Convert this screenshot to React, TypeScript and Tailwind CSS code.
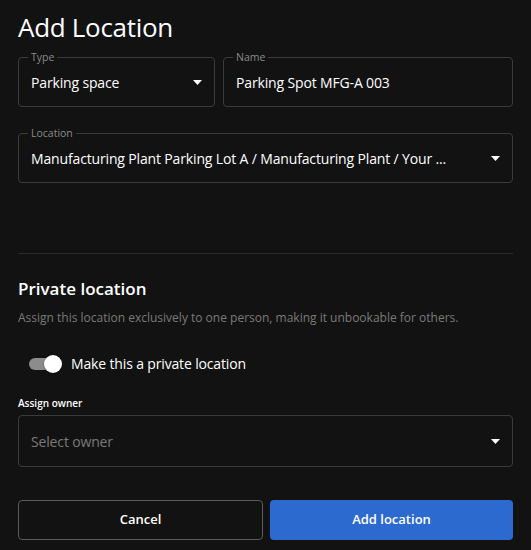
import React from 'react'

const Caret = () => (
  <svg width="9" height="5" viewBox="0 0 9 5" className="shrink-0">
    <path d="M0 0 L9 0 L4.5 5 Z" fill="#ffffff" />
  </svg>
)

interface FieldProps {
  label: string
  children: React.ReactNode
  select?: boolean
  className?: string
}

const OutlinedField = ({ label, children, select, className }: FieldProps) => (
  <div
    className={`relative flex h-[50px] items-center rounded-[4px] border border-[#3b3b3b] pl-3 pr-3 ${className ?? ''}`}
  >
    <span className="absolute -top-[8px] left-[9px] bg-[#121212] px-[3px] text-[10.5px] leading-[14px] text-[#8a8a8a]">
      {label}
    </span>
    <span className="flex-1 truncate text-[14px] tracking-[-0.15px] text-white">{children}</span>
    {select && (
      <span className="ml-3">
        <Caret />
      </span>
    )}
  </div>
)

export default function App() {
  return (
    <div
      className="min-h-[550px] w-[531px] bg-[#121212] px-[18px] pt-[10px] text-white"
      style={{ fontFamily: '"Open Sans", "Noto Sans", sans-serif' }}
    >
      <h1 className="text-[26px] leading-[34px] font-normal tracking-[-0.3px]">Add Location</h1>

      <div className="mt-[13px] flex gap-[8px]">
        <OutlinedField label="Type" select className="w-[197px]">
          Parking space
        </OutlinedField>
        <OutlinedField label="Name" className="flex-1">
          Parking Spot MFG-A 003
        </OutlinedField>
      </div>

      <OutlinedField label="Location" select className="mt-[26px]">
        Manufacturing Plant Parking Lot A / Manufacturing Plant / Your ...
      </OutlinedField>

      <div className="mt-[70px] h-px bg-[#2a2a2a]" />

      <h2 className="mt-[23px] text-[17px] leading-[24px] font-semibold">Private location</h2>
      <p className="mt-[9px] text-[12px] leading-[16px] text-[#7a7a7a]">
        Assign this location exclusively to one person, making it unbookable for others.
      </p>

      <div className="mt-[28px] flex items-center pl-[11px]">
        <div className="relative h-[12px] w-[27px] rounded-full bg-[#8c8c8c]">
          <div className="absolute -top-[3px] right-[-6px] h-[18px] w-[18px] rounded-full bg-white shadow-[0_1px_2px_rgba(0,0,0,0.4)]" />
        </div>
        <span className="ml-[15px] text-[14px] leading-[20px] tracking-[-0.15px]">Make this a private location</span>
      </div>

      <div className="mt-[22px] text-[10px] leading-[14px] font-semibold">Assign owner</div>

      <div className="mt-[5px] flex h-[52px] items-center rounded-[4px] border border-[#3b3b3b] px-3">
        <span className="flex-1 text-[14px] tracking-[-0.15px] text-[#7a7a7a]">Select owner</span>
        <Caret />
      </div>

      <div className="mt-[33px] flex gap-[7px]">
        <button className="h-[40px] flex-1 rounded-[4px] border border-[#5a5a5a] text-[13px] font-semibold text-white">
          Cancel
        </button>
        <button className="h-[40px] flex-1 rounded-[4px] bg-[#2d6ad0] text-[13px] font-semibold text-white">
          Add location
        </button>
      </div>
    </div>
  )
}
